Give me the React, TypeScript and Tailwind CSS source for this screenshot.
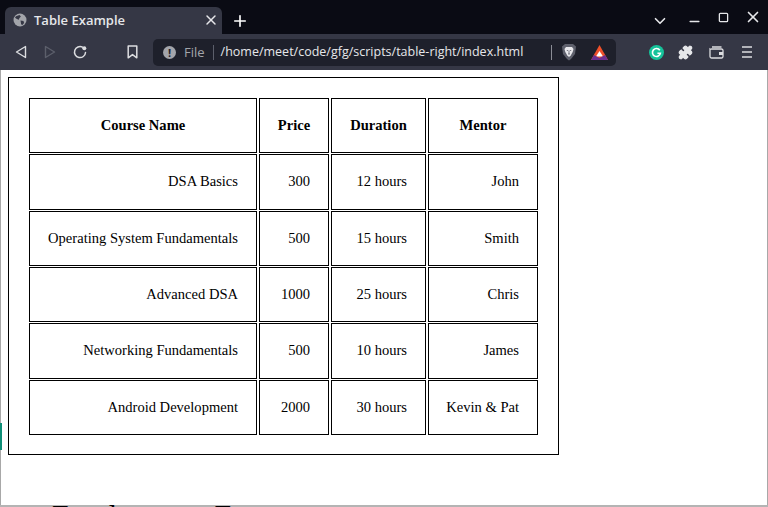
import React from "react";
import { X, Plus, ChevronDown, Minus, Square, Puzzle } from "lucide-react";

const rows = [
  ["DSA Basics", "300", "12 hours", "John"],
  ["Operating System Fundamentals", "500", "15 hours", "Smith"],
  ["Advanced DSA", "1000", "25 hours", "Chris"],
  ["Networking Fundamentals", "500", "10 hours", "James"],
  ["Android Development", "2000", "30 hours", "Kevin & Pat"],
];

const headers = ["Course Name", "Price", "Duration", "Mentor"];
const colWidths = ["w-[228px]", "w-[70px]", "w-[95px]", "w-[110px]"];

function Globe() {
  return (
    <svg width="14" height="14" viewBox="0 0 14 14" className="shrink-0">
      <circle cx="7" cy="7" r="6.5" fill="#a3a5ab" />
      <path d="M3 3.2 6.500 2l1.400 1.600-1.600 1.600-.4 1.500-2-.6L2 4.800zM7.500 7.500l3 .6.6 1.800-2 2.400-1-1.200z" fill="#353745" />
    </svg>
  );
}

function TriangleIcon({ dim }: { dim?: boolean }) {
  return (
    <svg width="12" height="14" viewBox="0 0 12 14" fill="none" stroke={dim ? "#5c5f6b" : "#dcdde0"} strokeWidth="1.4" strokeLinejoin="round">
      {dim ? <path d="M1.500 1.500v11L10.500 7z" /> : <path d="M10.500 1.500v11L1.500 7z" />}
    </svg>
  );
}

function Reload() {
  return (
    <svg width="14" height="14" viewBox="0 0 14 14" fill="none">
      <path d="M12.500 7.500A5.500 5.500 0 1 1 9.500 2.200" stroke="#dcdde0" strokeWidth="1.500" strokeLinecap="round" />
      <circle cx="11.300" cy="3.300" r="2" fill="#dcdde0" />
    </svg>
  );
}

function Bookmark() {
  return (
    <svg width="11" height="14" viewBox="0 0 11 14" fill="none" stroke="#dcdde0" strokeWidth="1.500" strokeLinejoin="round">
      <path d="M1.200 1h8.600v11.800L5.500 9.600 1.200 12.800z" />
    </svg>
  );
}

function Shield() {
  return (
    <svg width="16" height="18" viewBox="0 0 16 18">
      <path d="M4 1h8l3 2.500-1 7.500-4 5-2 1.500L6 16l-4-5-1-7.500z" fill="#5e606c" />
      <path d="M5 4h6l1.500 2-.8 3-2 3.500L8 14l-1.700-1.500-2-3.500-.8-3z" fill="#e8e8ec" />
      <path d="M5.800 7.500h1.500M8.700 7.500h1.500M7 11h2M8 8v3" stroke="#5e606c" strokeWidth="0.8" />
    </svg>
  );
}

function Bat() {
  return (
    <svg width="17" height="15" viewBox="0 0 17 15">
      <path d="M8.500 0 17 15H0z" fill="#f0502a" />
      <path d="M8.500 6 12 11.500H5z" fill="#ffffff" />
      <path d="M0 15l3-5 5.500 3 5.500-3 3 5z" fill="#6b2f8f" />
    </svg>
  );
}

function Grammarly() {
  return (
    <svg width="15" height="15" viewBox="0 0 15 15" fill="none">
      <circle cx="7.500" cy="7.500" r="7.500" fill="#15c39a" />
      <path d="M10.800 5.300A4 4 0 1 0 11.400 8.200H8.400" stroke="#ffffff" strokeWidth="1.600" />
    </svg>
  );
}

function Wallet() {
  return (
    <svg width="15" height="13" viewBox="0 0 15 13" fill="none" stroke="#dcdde0" strokeWidth="1.300">
      <path d="M3 1h9.500M1 3v7.500A1.500 1.500 0 0 0 2.500 12h10A1.500 1.500 0 0 0 14 10.500V4.500A1.500 1.500 0 0 0 12.500 3H2.500A1.500 1.500 0 0 1 1 3z" />
      <path d="M10 7.500h4" strokeWidth="3" />
    </svg>
  );
}

function Hamburger() {
  return (
    <svg width="10" height="12" viewBox="0 0 10 12" stroke="#dcdde0" strokeWidth="1.500">
      <path d="M0 1h10M0 6h10M0 11h10" />
    </svg>
  );
}

function TabBar() {
  return (
    <div className="h-[34px] bg-[#0a0b14] flex items-end pl-[5px] shrink-0">
      <div className="w-[217px] h-[27px] bg-[#353745] rounded-t-[6px] flex items-center pl-[8px] pr-[3px] gap-[7px] pb-[1px]">
        <Globe />
        <span className="text-[13px] font-semibold text-[#e6e7ea] flex-1 leading-none">Table Example</span>
        <X size={16} color="#e6e7ea" strokeWidth={2.2} />
      </div>
      <div className="ml-[9px] h-[27px] flex items-center">
        <Plus size={18} color="#ffffff" strokeWidth={2.2} />
      </div>
      <div className="flex items-center ml-auto h-[34px] pr-[6px]">
        <ChevronDown size={18} color="#e6e7ea" strokeWidth={2.2} className="mt-[7px]" />
        <Minus size={15} color="#e6e7ea" strokeWidth={2.2} className="ml-[18px] mt-[8px]" />
        <Square size={11} color="#e6e7ea" strokeWidth={2.8} className="ml-[16px]" />
        <X size={18} color="#e6e7ea" strokeWidth={2.2} className="ml-[15px]" />
      </div>
    </div>
  );
}

function Toolbar() {
  return (
    <div className="h-[36px] bg-[#353745] flex items-center shrink-0 pl-[15px]">
      <TriangleIcon />
      <div className="ml-[17px]"><TriangleIcon dim /></div>
      <div className="ml-[17px]"><Reload /></div>
      <div className="ml-[40px]"><Bookmark /></div>
      <div className="ml-[15px] w-[463px] h-[27px] rounded-[5px] bg-[#1e202b] flex items-center pl-[10px]">
        <div className="w-[13px] h-[13px] rounded-full bg-[#a3a5ab] text-[#1e202b] text-[11px] font-bold flex items-center justify-center leading-none">!</div>
        <span className="ml-[8px] text-[13px] text-[#a3a5ab] leading-none">File</span>
        <div className="ml-[8px] w-px h-[15px] bg-[#5c5f6b]" />
        <span className="ml-[7px] text-[12.5px] text-[#e6e7ea] leading-none w-[330px] whitespace-nowrap">/home/meet/code/gfg/scripts/table-right/index.html</span>
        <div className="w-px h-[15px] bg-[#8a8c95]" />
        <div className="ml-[9px]"><Shield /></div>
        <div className="ml-[14px]"><Bat /></div>
      </div>
      <div className="ml-[33px]"><Grammarly /></div>
      <Puzzle size={15} color="#e6e7ea" fill="#e6e7ea" className="ml-[14px]" />
      <div className="ml-[16px]"><Wallet /></div>
      <div className="ml-[18px]"><Hamburger /></div>
    </div>
  );
}

export default function App() {
  return (
    <div className="w-[768px] h-[507px] overflow-hidden flex flex-col bg-[#e8e8e8] font-['Open_Sans',sans-serif]">
      <TabBar />
      <Toolbar />
      <div className="h-[435px] shrink-0 border-l border-r border-[#a8a8a8] bg-white pt-[7px] pl-[7px] relative">
        <div className="absolute left-[-1px] top-[353px] w-[2px] h-[27px] bg-[#0f8f78]" />
        <div className="w-[551px] h-[378px] border border-black pl-[20px] pt-[20px] font-['Liberation_Serif',serif] text-[14.55px] text-black">
          <table className="border-separate border-spacing-x-[2px] border-spacing-y-[1px] -ml-[2px] -mt-[1px] table-fixed">
            <thead>
              <tr>
                {headers.map((h, i) => (
                  <th key={h} className={`h-[55px] border border-black text-center font-bold pt-[1px] ${colWidths[i]}`}>{h}</th>
                ))}
              </tr>
            </thead>
            <tbody>
              {rows.map((row, r) => (
                <tr key={row[0]} className={r === 0 || r === 3 ? "h-[56px]" : "h-[55px]"}>
                  {row.map((cell, i) => (
                    <td key={i} className={`border border-black text-right pr-[18px] ${r === 0 || r === 3 ? "pb-[1px]" : "pt-[1px]"} ${colWidths[i]}`}>{cell}</td>
                  ))}
                </tr>
              ))}
            </tbody>
          </table>
        </div>
      </div>
      <div className="h-[2px] bg-[#b4b4b4] overflow-hidden shrink-0 pl-[52px] font-['Liberation_Serif',serif] text-[30px] leading-none text-black whitespace-nowrap">
        <div className="-mt-[5px]">Employment Form</div>
      </div>
    </div>
  );
}
